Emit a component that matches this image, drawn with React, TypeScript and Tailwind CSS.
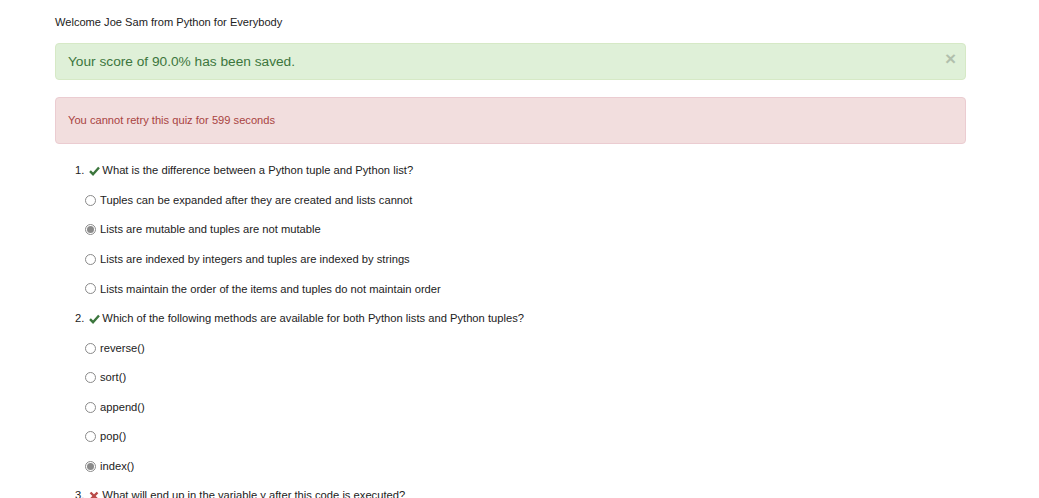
import React from "react";

const font = { fontFamily: '"Liberation Sans", Arial, Helvetica, sans-serif' };

function Radio({ checked }: { checked?: boolean }) {
  return (
    <span className="inline-flex items-center justify-center w-[11px] h-[11px] rounded-full border border-[#8a8a8a] bg-white mr-[4px] shrink-0">
      {checked && <span className="block w-[7px] h-[7px] rounded-full bg-[#8a8a8a]" />}
    </span>
  );
}

function Check() {
  return (
    <svg width="11" height="10" viewBox="0 0 11 10" className="mr-[2px] shrink-0">
      <polyline points="1,5.2 4,8.2 10,1.5" fill="none" stroke="#3c763d" strokeWidth="2.4" />
    </svg>
  );
}

function Cross() {
  return (
    <svg width="10" height="10" viewBox="0 0 10 10" className="mr-[3px] shrink-0">
      <path d="M1.5 1.5 L8.5 8.5 M8.5 1.5 L1.5 8.5" stroke="#b94a48" strokeWidth="2.4" />
    </svg>
  );
}

const Row = ({ children, indent }: { children: React.ReactNode; indent?: boolean }) => (
  <div className={`h-[29.55px] flex items-center ${indent ? "pl-[31px]" : ""}`}>{children}</div>
);

export default function App() {
  const q1 = [
    ["Tuples can be expanded after they are created and lists cannot", false],
    ["Lists are mutable and tuples are not mutable", true],
    ["Lists are indexed by integers and tuples are indexed by strings", false],
    ["Lists maintain the order of the items and tuples do not maintain order", false],
  ] as const;
  const q2 = [
    ["reverse()", false],
    ["sort()", false],
    ["append()", false],
    ["pop()", false],
    ["index()", true],
  ] as const;
  return (
    <div style={font} className="w-[1039px] h-[498px] overflow-hidden bg-white text-[11.2px] text-[#222] pl-[55px] pr-[73px]">
      <div className="pt-[15px] leading-[14px] mb-[14px] text-[11.1px]">Welcome Joe Sam from Python for Everybody</div>
      <div className="relative rounded-[4px] border border-[#d6e9c6] bg-[#dff0d8] text-[#3c763d] text-[13.7px] leading-[21px] py-[7px] pl-[12px] pr-[35px]">
        Your score of 90.0% has been saved.
        <span className="absolute right-[9px] top-[4px] text-[19px] leading-[21px] font-bold text-black opacity-20">×</span>
      </div>
      <div className="mt-[17px] rounded-[4px] border border-[#ebccd1] bg-[#f2dede] text-[#a94442] text-[11.15px] leading-[15px] py-[15px] px-[12px]">
        You cannot retry this quiz for 599 seconds
      </div>
      <div className="mt-[12px] pl-[20px]">
        <Row>
          <span className="mr-[5px]">1.</span>
          <Check />
          <span>What is the difference between a Python tuple and Python list?</span>
        </Row>
        {q1.map(([t, c]) => (
          <Row key={t} indent>
            <span className="-ml-[21px] inline-flex items-center">
              <Radio checked={c} />
              <span>{t}</span>
            </span>
          </Row>
        ))}
        <Row>
          <span className="mr-[5px]">2.</span>
          <Check />
          <span>Which of the following methods are available for both Python lists and Python tuples?</span>
        </Row>
        {q2.map(([t, c]) => (
          <Row key={t} indent>
            <span className="-ml-[21px] inline-flex items-center">
              <Radio checked={c} />
              <span>{t}</span>
            </span>
          </Row>
        ))}
        <Row>
          <span className="mr-[5px]">3.</span>
          <Cross />
          <span>What will end up in the variable y after this code is executed?</span>
        </Row>
      </div>
    </div>
  );
}
